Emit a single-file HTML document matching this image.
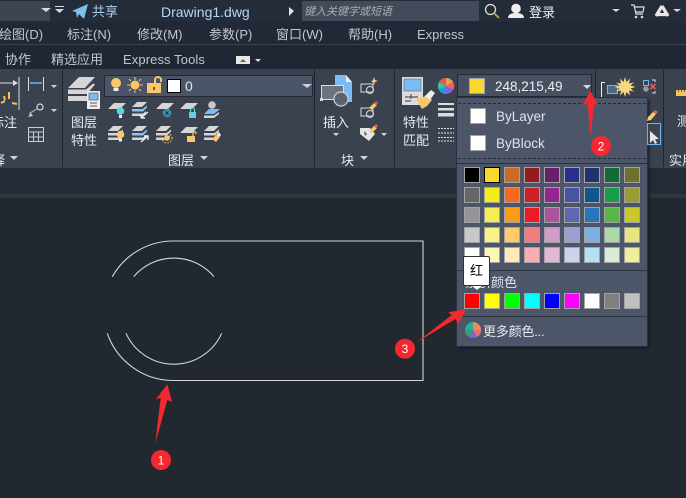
<!DOCTYPE html>
<html><head><meta charset="utf-8">
<style>
html,body{margin:0;padding:0;width:686px;height:498px;overflow:hidden;background:#22282f}
body{position:relative;font-family:"Liberation Sans","Noto Sans CJK SC",sans-serif}
.r{position:absolute}
.t{position:absolute;white-space:nowrap;line-height:16px;font-size:13px;color:#c2c7ce}
.w{color:#e8eaee}
.s{position:absolute;width:14px;height:14px;border:1px solid #a3a3a3}
svg{position:absolute;left:0;top:0}
</style></head><body>
<div class="r" style="left:0;top:0;width:686px;height:22px;background:#252c39"></div>
<div class="r" style="left:0;top:22px;width:686px;height:22px;background:#222936"></div>
<div class="r" style="left:0;top:44px;width:686px;height:1px;background:#3a414d"></div>
<div class="r" style="left:0;top:45px;width:686px;height:24px;background:#202734"></div>
<div class="r" style="left:0;top:69px;width:686px;height:99px;background:#3a424f"></div>
<div class="r" style="left:0;top:168px;width:686px;height:26px;background:#252b36"></div>
<div class="r" style="left:0;top:194px;width:686px;height:4px;background:#2f3640"></div>
<div class="r" style="left:0;top:1px;width:50px;height:20px;background:#3d4553"></div>
<div class="r" style="left:302px;top:1px;width:177px;height:20px;background:#434b5a"></div>
<div class="r" style="left:62px;top:70px;width:1px;height:97px;background:#1f2530"></div>
<div class="r" style="left:314px;top:70px;width:1px;height:97px;background:#1f2530"></div>
<div class="r" style="left:394px;top:70px;width:1px;height:97px;background:#1f2530"></div>
<div class="r" style="left:595px;top:70px;width:1px;height:97px;background:#1f2530"></div>
<div class="r" style="left:663px;top:70px;width:1px;height:97px;background:#1f2530"></div>
<div class="r" style="left:104px;top:75px;width:207px;height:20px;background:#4b5567;border:1px solid #232a35"></div>

<svg width="686" height="498" viewBox="0 0 686 498">
<defs>
<g id="st"><path d="M0 5L5 0H15L10 5z" fill="#d6d6d6"/><path d="M0 7H10.500L15 3.500V5.500L11 9.500H0z" fill="#d6d6d6"/><path d="M0 11.500H11L14 9V11L11 14H0z" fill="#d6d6d6"/></g>
<g id="sb"><path d="M0 5L5 0H15L10 5z" fill="#d6d6d6"/><path d="M0 7H10.500L15 3.500V5.500L11 9.500H0z" fill="#86c3f3"/><path d="M0 11.500H11L14 9V11L11 14H0z" fill="#d6d6d6"/></g>
<path id="pg" d="M0 6L6 0H18L12 6z" fill="#d6d6d6"/>
</defs>
<g fill="#d8d8d8">
<path d="M41 8h10l-5 4z"/><path d="M55 6h9v1h-9zM55 9h9l-4.500 4z"/><path d="M289 7l5 4-5 5z" fill="#e4e4e4"/>
<path d="M612 9h8l-4 3zM673 9h8l-4 3z"/>
</g>
<path d="M72 11L88 4l-4 15-5-5-2 4-1-6z" fill="#7cc0ef"/>
<circle cx="490.500" cy="9.500" r="5" fill="none" stroke="#ddd" stroke-width="1.300"/><path d="M494 13l5 5" stroke="#c89a50" stroke-width="1.800"/>
<circle cx="516" cy="8.500" r="4.800" fill="#eee"/><path d="M508 18c0-4 4-5 8-5s8 1 8 5z" fill="#eee"/>
<path d="M631 5h3l2 9h7M635 7h9l-1 5h-7" fill="none" stroke="#ddd" stroke-width="1.200"/><circle cx="636" cy="17" r="1.300" fill="#ddd"/><circle cx="642" cy="17" r="1.300" fill="#ddd"/>
<path d="M662 6l-6 10M662 6l6 10M657 14.500h10" fill="none" stroke="#e8e8e8" stroke-width="3.200"/>
<rect x="236" y="56" width="14" height="8" fill="#e8e8e8"/><path d="M240 62l3-3 3 3z" fill="#666"/><path d="M255 59h6l-3 3z" fill="#ddd"/>

<!-- annotate panel -->
<path d="M0 83h17M19 77v33" stroke="#ddd" fill="none"/><path d="M13 80l5 3-5 3z" fill="#ddd"/>
<path d="M4 96l1 4M9 92v7M1 103l4-2M12 103l5 1" stroke="#f2c060" stroke-width="2"/>
<path d="M28.500 77v14M43.500 77v14" stroke="#dcdcdc" fill="none"/><path d="M30 83h12" stroke="#6ab5ee" stroke-width="1.500"/>
<path d="M51 85h6l-3 3zM51 109h6l-3 3zM10 156h8l-4 4zM200 156h8l-4 4zM333 133h6l-3 3zM381 133h6l-3 3zM360 156h8l-4 4z" fill="#cfd2d6"/>
<circle cx="40" cy="107" r="3" fill="none" stroke="#ddd" stroke-width="1.200"/><path d="M37 109l-7 4v3" fill="none" stroke="#aaa" stroke-width="1.200"/><path d="M28 117l3-4 2 3z" fill="#ccc"/>
<path d="M28.500 127.500h15v14h-15zM28.500 132h15M28.500 137h15M33.500 132v9.500M38.500 132v9.500" fill="none" stroke="#ccc"/>

<!-- layer big -->
<path d="M68 88L79 77H95L85 88z" fill="#d6d6d6"/>
<path d="M68 89.500H86L93 83.500L95 84.500L87 94H68z" fill="#d6d6d6"/>
<path d="M68 96H87V101H68z" fill="#d6d6d6"/>
<rect x="87" y="91" width="13" height="18" fill="#eee"/><rect x="89" y="93" width="9" height="7" fill="#7dbcf2" stroke="#444" stroke-width=".6"/>
<path d="M90 103h7M90 106h7" stroke="#555"/>
<!-- bulb etc in combo -->
<circle cx="116" cy="83" r="5" fill="#fbc76b"/><path d="M113.500 88h5v3h-5z" fill="#eee"/>
<circle cx="135" cy="85" r="4.500" fill="#fbc76b"/><path d="M135 77v3M135 90v3M127 85h3M140 85h3M129 79l2 2M139 89l2 2M141 79l-2 2M131 89l-2 2" stroke="#f3c470"/>
<rect x="147" y="83" width="14" height="10" fill="#fbc76b"/><path d="M155 83v-3c0-4 6-4 6 0v2" fill="none" stroke="#fbc76b" stroke-width="2"/><rect x="153" y="87" width="2" height="3" fill="#7a5a20"/>
<rect x="167.500" y="79.500" width="13" height="13" fill="#fff" stroke="#000"/>
<path d="M302 84h10l-5 4z" fill="#cfd2d6"/>

<!-- small layer icons row 1 -->
<use href="#pg" x="108" y="103"/>
<circle cx="120.500" cy="111" r="3.800" fill="#5fd3dd"/><rect x="119" y="115" width="3" height="3" fill="#eee"/>
<use href="#sb" x="132" y="102"/>
<path d="M141 118l7-6M141 118h4M141 118v-4" stroke="#eee" stroke-width="1.400" fill="none"/>
<use href="#pg" x="156" y="103"/>
<circle cx="167" cy="113" r="4.200" fill="#3fb6c0"/><path d="M163 113h8M167 109v8M164 110l6 6M170 110l-6 6" stroke="#225" stroke-width=".6"/>
<use href="#pg" x="180" y="103"/>
<rect x="189" y="112" width="7" height="6" fill="#5fd3dd"/><path d="M190.500 112v-2c0-3 4-3 4 0v2" fill="none" stroke="#5fd3dd" stroke-width="1.300"/>
<path d="M204 115H214L220 110H209z" fill="#7dbcf2" transform="translate(0,-1)"/><path d="M204 115.500H214L219 112V114L214 118H204z" fill="#d6d6d6"/><circle cx="212" cy="105" r="3.800" fill="#c8c8c8"/>

<!-- row 2 -->
<use href="#st" x="108" y="126"/>
<circle cx="120.500" cy="134.500" r="3.800" fill="#fbc76b"/><rect x="119" y="138.500" width="3" height="3" fill="#eee"/>
<use href="#sb" x="132" y="126"/>
<path d="M141 142l7-6M144 136h4v4" stroke="#eee" stroke-width="1.400" fill="none"/>
<use href="#st" x="156" y="126"/>
<circle cx="167" cy="138" r="2.800" fill="#3a424f"/><circle cx="167" cy="138" r="2.800" fill="#fbc76b"/><circle cx="167" cy="138" r="5" fill="none" stroke="#fbc76b" stroke-dasharray="1.500 1.500"/>
<use href="#pg" x="180" y="127"/>
<rect x="187" y="136" width="8" height="6" fill="#fbc76b"/><path d="M193 136v-2c0-3 3-3 3 0" fill="none" stroke="#fbc76b" stroke-width="1.300"/>
<use href="#st" x="204" y="126"/>
<path d="M212 139l5-5 3 3-4 5z" fill="#fbc76b"/><path d="M217 134l2-2 2 3-2 2z" fill="#eee"/>

<!-- insert -->
<path d="M335 75h11l6 7v20h-17z" fill="#7dbcf2"/><path d="M346 75v7h6" fill="#eee"/>
<rect x="321.500" y="85.500" width="22" height="14" fill="#6d7481" stroke="#ddd"/><rect x="320" y="98" width="3" height="3" fill="#ddd"/>
<circle cx="341" cy="99" r="7" fill="#5a6270" stroke="#cfcfcf" stroke-width="1.200"/>
<g fill="none" stroke="#ddd"><path d="M361 84h12v8h-12z"/><circle cx="370" cy="90" r="3.500"/><path d="M361 108h12v8h-12z"/><circle cx="370" cy="114" r="3.500"/></g>
<path d="M371 82l2-2 1-3 1 3 3 1-3 1-1 3-1-3z" fill="#f9cf6d"/>
<path d="M369 108l5-5 3 2-5 5z" fill="#f7c873"/><path d="M374 103l2-2 2 2-2 2z" fill="#e55"/>
<path d="M360 128h10l5 6-6 7-9-7z" fill="#e4e4e4"/><path d="M364 131l3 3-2 2z" fill="#555"/>
<path d="M369 131l5-5 3 2-5 5z" fill="#f7c873"/><path d="M374 126l2-2 2 2-2 2z" fill="#e55"/>

<!-- match -->
<rect x="402" y="77" width="21" height="28" fill="#dcdcdc"/><rect x="404" y="79" width="17" height="12" fill="#7dbcf2" stroke="#666" stroke-width=".6"/>
<path d="M405 97h13M405 101h6M411 94v5" stroke="#555" stroke-width="1.200" fill="none"/>
<path d="M416 99l6 10 5-3 5-6-5-5-4 2z" fill="#fbc76b"/><path d="M425 96l6-6 4 3-5 7z" fill="#eee"/>
<circle cx="446" cy="86" r="8" fill="#7766e0"/><path d="M446 86V78a8 8 0 0 1 7 4z" fill="#f0a040"/><path d="M446 86l7-4a8 8 0 0 1 0 8z" fill="#ef5f5f"/><path d="M446 86V78a8 8 0 0 0-7 4z" fill="#e25757"/><path d="M446 86l-7-4a8 8 0 0 0 0 8z" fill="#2ec6a0"/><path d="M446 86l-7 4a8 8 0 0 0 7 4z" fill="#3090e0"/>
<path d="M438 103h16v2h-16zM438 108h16v2.500h-16zM438 113h16v3.500h-16z" fill="#dcdcdc"/>
<path d="M438 128.500h16M438 133h16M438 137.500h16M438 141h16" stroke="#ddd" stroke-dasharray="2 1" fill="none"/>

<!-- right of panel -->
<path d="M605 82.500h-3.500V98" stroke="#eee" fill="none"/>
<path d="M607.500 85.500h10v8h-10z" fill="#4a6a8a" stroke="#6db6ef"/>
<path d="M625 77l1.500 5 3.500-3.500-1 5 5-1-3.500 3 5 1.500-5 1.500 3.500 3-5-1 1 5-3.500-3.500-1.500 5-1.500-5-3.500 3.500 1-5-5 1 3.500-3-5-1.500 5-1.500-3.500-3 5 1-1-5 3.500 3.500z" fill="#f9d77e"/>
<rect x="643.500" y="80.500" width="5" height="5" fill="none" stroke="#6db6ef"/><circle cx="646" cy="89" r="2.800" fill="#999"/><path d="M650.500 84l5 5M655.500 84l-5 5" stroke="#e55" stroke-width="1.600"/><path d="M652 80h3v2M655 91v2h-3" stroke="#ddd" fill="none"/>
<path d="M676 90h12v6h-12z" fill="#f2c55c"/><path d="M678.500 90v2M681.500 90v2M684.500 90v2" stroke="#8a6a20"/>

<!-- canvas drawing -->
<g fill="none" stroke="#d6d6d6" stroke-width="1.100">
<path d="M172.800 241H423V380.500H172.800"/>
<path d="M112.300 276.700A70 70 0 0 1 172.800 241"/>
<path d="M107.300 333.300A70 70 0 0 0 172.800 380.500"/>
<path d="M133.700 276.700A52.500 52.500 0 0 1 214 276.700"/>
<path d="M126 333.300A52.500 52.500 0 0 0 221.700 333.300"/>
</g>
</svg>

<div class="t" style="left:-1px;top:27px">绘图(D)</div>
<div class="t" style="left:67px;top:27px">标注(N)</div>
<div class="t" style="left:137px;top:27px">修改(M)</div>
<div class="t" style="left:209px;top:27px">参数(P)</div>
<div class="t" style="left:276px;top:27px">窗口(W)</div>
<div class="t" style="left:348px;top:27px">帮助(H)</div>
<div class="t" style="left:417px;top:27px">Express</div>
<div class="t" style="left:5px;top:52px">协作</div>
<div class="t" style="left:51px;top:52px">精选应用</div>
<div class="t" style="left:123px;top:52px;letter-spacing:.1px">Express Tools</div>
<div class="t" style="left:92px;top:4px;color:#a8d0f5">共享</div>
<div class="t" style="left:161px;top:4px;color:#b5d6f5;font-size:14px">Drawing1.dwg</div>
<div class="t" style="left:304px;top:4px;font-size:11px;font-style:italic;color:#a7acb5">键入关键字或短语</div>
<div class="t" style="left:529px;top:5px;color:#f0f2f5">登录</div>
<div class="t" style="left:185px;top:78px;color:#dde6f0;font-size:14px">0</div>
<div class="t w" style="left:0;top:115px;width:17px;overflow:hidden;direction:rtl">标注</div>
<div class="t w" style="left:-8px;top:153px">释</div>
<div class="t w" style="left:71px;top:115px">图层</div>
<div class="t w" style="left:71px;top:133px">特性</div>
<div class="t w" style="left:168px;top:153px">图层</div>
<div class="t w" style="left:323px;top:115px">插入</div>
<div class="t w" style="left:341px;top:153px">块</div>
<div class="t w" style="left:403px;top:115px">特性</div>
<div class="t w" style="left:403px;top:133px">匹配</div>
<div class="t w" style="left:677px;top:114px">测</div>
<div class="t w" style="left:669px;top:153px">实用</div>

<!-- color combo -->
<div class="r" style="left:457px;top:74px;width:135px;height:23px;background:#475061;border:1px solid #232a35;box-sizing:border-box"></div>
<div class="r" style="left:469px;top:78px;width:14px;height:14px;background:#f8d731;border:1px solid #a3a3a3"></div>
<div class="t" style="left:495px;top:79px;color:#eef0f3;font-size:13.500px">248,215,49</div>
<div class="r" style="left:583px;top:85px;width:0;height:0;border-left:4px solid transparent;border-right:4px solid transparent;border-top:4px solid #d8dadd"></div>

<!-- dropdown -->
<div class="r" style="left:457px;top:98px;width:190px;height:248px;background:#4c5668;box-shadow:2px 2px 3px #14181f;outline:1px solid #2a303b"></div>
<div class="r" style="left:458px;top:103px;width:188px;border-top:1px dashed #232a35"></div>
<div class="r" style="left:458px;top:158px;width:188px;border-top:1px dashed #232a35"></div>
<div class="r" style="left:457px;top:163px;width:190px;height:1px;background:#2a303b"></div>
<div class="r" style="left:457px;top:270px;width:190px;height:1px;background:#2f3643"></div>
<div class="r" style="left:457px;top:316px;width:190px;height:1px;background:#2f3643"></div>
<div class="r" style="left:470px;top:108px;width:14px;height:14px;background:#fff;border:1px solid #a3a3a3"></div>
<div class="r" style="left:470px;top:135px;width:14px;height:14px;background:#fff;border:1px solid #a3a3a3"></div>
<div class="t" style="left:496px;top:109px;color:#e0e3e8;font-size:13.500px">ByLayer</div>
<div class="t" style="left:496px;top:136px;color:#e0e3e8;font-size:13.500px">ByBlock</div>

<i class="s" style="left:464px;top:167px;background:#000"></i><i class="s" style="left:484px;top:167px;background:#f8d731;border-color:#000"></i><i class="s" style="left:504px;top:167px;background:#c96a25"></i><i class="s" style="left:524px;top:167px;background:#951b1e"></i><i class="s" style="left:544px;top:167px;background:#662168"></i><i class="s" style="left:564px;top:167px;background:#2a2f8c"></i><i class="s" style="left:584px;top:167px;background:#1f3270"></i><i class="s" style="left:604px;top:167px;background:#14693a"></i><i class="s" style="left:624px;top:167px;background:#6f722e"></i>
<i class="s" style="left:464px;top:187px;background:#666"></i><i class="s" style="left:484px;top:187px;background:#f3ec19"></i><i class="s" style="left:504px;top:187px;background:#f7691f"></i><i class="s" style="left:524px;top:187px;background:#cd2027"></i><i class="s" style="left:544px;top:187px;background:#93278f"></i><i class="s" style="left:564px;top:187px;background:#4753a4"></i><i class="s" style="left:584px;top:187px;background:#0f568c"></i><i class="s" style="left:604px;top:187px;background:#149e4a"></i><i class="s" style="left:624px;top:187px;background:#999b35"></i>
<i class="s" style="left:464px;top:207px;background:#939598"></i><i class="s" style="left:484px;top:207px;background:#f6ee50"></i><i class="s" style="left:504px;top:207px;background:#fa9b18"></i><i class="s" style="left:524px;top:207px;background:#ed1c24"></i><i class="s" style="left:544px;top:207px;background:#a9549f"></i><i class="s" style="left:564px;top:207px;background:#5e68b0"></i><i class="s" style="left:584px;top:207px;background:#2776bd"></i><i class="s" style="left:604px;top:207px;background:#58b847"></i><i class="s" style="left:624px;top:207px;background:#c9c925"></i>
<i class="s" style="left:464px;top:227px;background:#c8c9cb"></i><i class="s" style="left:484px;top:227px;background:#f9f287"></i><i class="s" style="left:504px;top:227px;background:#fdcb69"></i><i class="s" style="left:524px;top:227px;background:#f47a7d"></i><i class="s" style="left:544px;top:227px;background:#d29cc8"></i><i class="s" style="left:564px;top:227px;background:#9b9ed0"></i><i class="s" style="left:584px;top:227px;background:#7eb1e2"></i><i class="s" style="left:604px;top:227px;background:#aad8a8"></i><i class="s" style="left:624px;top:227px;background:#e6e67e"></i>
<i class="s" style="left:464px;top:247px;background:#fff"></i><i class="s" style="left:484px;top:247px;background:#fbf7b5"></i><i class="s" style="left:504px;top:247px;background:#fee9b9"></i><i class="s" style="left:524px;top:247px;background:#f9adb2"></i><i class="s" style="left:544px;top:247px;background:#e1b8d8"></i><i class="s" style="left:564px;top:247px;background:#d0d1ec"></i><i class="s" style="left:584px;top:247px;background:#b5e0f8"></i><i class="s" style="left:604px;top:247px;background:#d8ecd4"></i><i class="s" style="left:624px;top:247px;background:#eeef9d"></i>

<i class="s" style="left:464px;top:293px;background:#f00"></i><i class="s" style="left:484px;top:293px;background:#ff0"></i><i class="s" style="left:504px;top:293px;background:#0f0"></i><i class="s" style="left:524px;top:293px;background:#0ff"></i><i class="s" style="left:544px;top:293px;background:#00f"></i><i class="s" style="left:564px;top:293px;background:#f0f"></i><i class="s" style="left:584px;top:293px;background:#fff"></i><i class="s" style="left:604px;top:293px;background:#808080"></i><i class="s" style="left:624px;top:293px;background:#c0c0c0"></i>

<div class="t" style="left:465px;top:275px;color:#e0e3e8">索引颜色</div>
<div class="t" style="left:483px;top:324px;color:#e8eaee;letter-spacing:-.2px">更多颜色...</div>

<div class="r" style="left:463px;top:256px;width:27px;height:30px;background:#fff;border:1px solid #333;box-sizing:border-box;border-radius:2px"></div>
<div class="t" style="left:470px;top:263px;color:#000;font-size:13px">红</div>

<svg width="686" height="498" viewBox="0 0 686 498">
<path d="M472 286h10l-5 4z" fill="#fff"/>
<circle cx="473" cy="330" r="8" fill="#7766e0"/><path d="M473 330V322a8 8 0 0 1 8 8z" fill="#f08a50"/><path d="M473 330h8a8 8 0 0 1-4 7z" fill="#e87070"/><path d="M473 330V322a8 8 0 0 0-8 8z" fill="#22b0a0"/><path d="M473 330h-8a8 8 0 0 0 4 7z" fill="#3aa070"/>
<rect x="647.500" y="123.500" width="13" height="21" fill="#3d4552" stroke="#6db6ef"/><path d="M650 131v12l3-3 2 4 2-1-2-4h4z" fill="#e8e8e8"/>
<path d="M648 117l5-5 3 2-5 6-4 1z" fill="#f7c873"/><path d="M653 112l2-2 3 2-2 2z" fill="#e55"/>
<g fill="#f4282f">
<path d="M167.300 384.300L156 399.300L160.700 398L155.300 443.300L167.300 400L172 402z"/>
<circle cx="161" cy="460" r="10"/>
<path d="M590.300 90.700L582 106L587.300 103.300L591 136.700L593.800 104.300L598.300 105.300z"/>
<circle cx="601" cy="146" r="10"/>
<path d="M466 309.300L448.300 312.300L451.700 315L416.700 342.300L455.500 319L458.300 324z"/>
<circle cx="405" cy="348.700" r="10"/>
</g>
<g fill="#fff" font-family="Liberation Sans" font-size="12" text-anchor="middle">
<text x="161" y="464.500">1</text><text x="601" y="150.500">2</text><text x="405" y="353">3</text>
</g>
</svg>
</body></html>
